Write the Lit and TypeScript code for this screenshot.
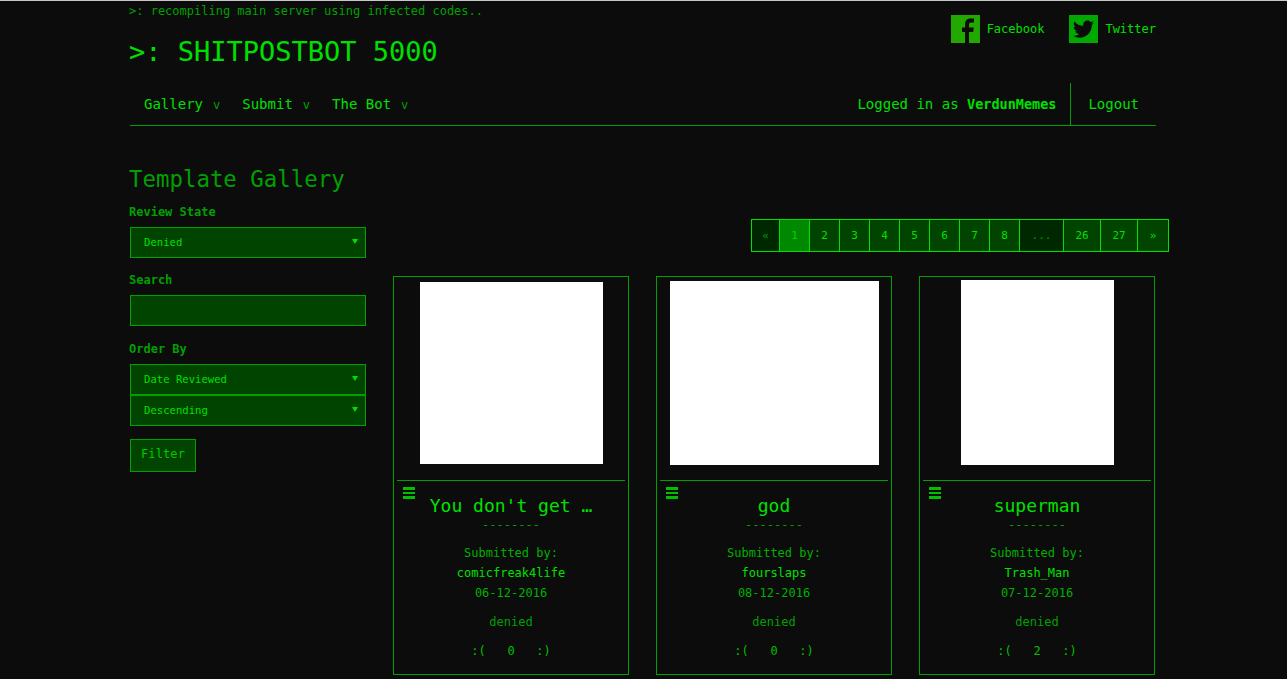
import { LitElement, html, css, svg } from "lit";
import { customElement } from "lit/decorators.js";

const cards = [
  { title: "You don't get …", user: "comicfreak4life", date: "06-12-2016", score: 0, w: 183, h: 182, top: 5, bottom: 16 },
  { title: "god", user: "fourslaps", date: "08-12-2016", score: 0, w: 209, h: 184, top: 4, bottom: 15 },
  { title: "superman", user: "Trash_Man", date: "07-12-2016", score: 2, w: 153, h: 185, top: 3, bottom: 15 },
];
const pages = [
  ["«", 29, "prev"], ["1", 30, "cur"], ["2", 30, ""], ["3", 30, ""], ["4", 30, ""], ["5", 30, ""], ["6", 30, ""],
  ["7", 30, ""], ["8", 30, ""], ["...", 44, "gap"], ["26", 37, ""], ["27", 37, ""], ["»", 31, ""],
] as [string, number, string][];

@customElement("app-root")
export class AppRoot extends LitElement {
  static styles = css`
    :host { display: block; height: 679px; overflow: hidden; background: #0c0c0c; border-top: 1px solid #c8c8c8; box-sizing: border-box;
      font-family: "DejaVu Sans Mono", monospace; color: #00e000; }
    .wrap { margin-left: 130px; width: 1026px; }
    .head { display: flex; justify-content: space-between; height: 82px; border: 0; }
    .tag { font-size: 12px; line-height: 20px; color: #00a000; margin-left: -1px; }
    h1 { margin: 10px 0 0 -1px; font-size: 27px; line-height: 42px; font-weight: 400; color: #00e000; }
    .social { display: flex; padding-top: 14px; }
    .soc { display: flex; align-items: flex-start; margin-left: 25px; font-size: 12px; line-height: 28px; }
    .soc svg { display: block; width: 29px; height: 28px; margin-right: 7px; }
    .nav { display: flex; justify-content: space-between; height: 42px; border-bottom: 1px solid #00a000; box-sizing: content-box; }
    .menu { display: flex; padding-left: 14px; font-size: 14px; line-height: 43px; }
    .menu span.i { margin-right: 22px; }
    .menu i { font-style: normal; font-size: 12px; color: #00a000; margin-left: 10px; }
    .right { display: flex; font-size: 14px; line-height: 42px; }
    .right b { font-size: 13.5px; }
    .logout { border-left: 1px solid #00a000; margin-left: 14px; padding: 0 17px 0 17px; line-height: 43px; }
    h2 { margin: 37px 0 0 -1px; font-size: 22.4px; line-height: 32px; font-weight: 400; color: #00a000; }
    .cols { display: flex; gap: 27px; }
    .side { width: 236px; flex: none; }
    label { display: block; font-size: 12px; font-weight: 700; line-height: 16px; color: #00a000; margin: 0 0 7px -1px; }
    .side label:first-child { margin-top: 9px; }
    .field { height: 31px; box-sizing: border-box; border: 1px solid #00a000; background: #004400; color: #00e000; font-size: 10.6px; line-height: 29px; padding-left: 13px; position: relative; margin-bottom: 14px; }
    .field.sel::after { content: ""; position: absolute; right: 7px; top: 11px; border: 3px solid transparent; border-top: 5px solid #00e000; border-bottom: 0; }
    .field.tight { margin-bottom: 0; }
    .field.input { margin-bottom: 15px; }
    .sel.gap { margin-bottom: 13px; }
    .btn { width: 66px; height: 33px; box-sizing: border-box; border: 1px solid #00a000; background: #004400; color: #00c800; font-size: 12px; line-height: 29px; text-align: center; letter-spacing: 0.1px; }
    .main { flex: 1; min-width: 0; }
    .pager { display: flex; justify-content: flex-end; margin: 24px -13px 24px 0; height: 33px; }
    .pg { box-sizing: border-box; height: 33px; border: 1px solid #00e000; border-left-width: 0; background: #004400; font-size: 11px; line-height: 31px; text-align: center; color: #00e000; }
    .pg.first { border-left-width: 1px; }
    .pg.prev { background: #002800; color: #00a000; border-left-width: 1px; }
    .pg.cur { background: #008800; color: #00d000; }
    .pg.gap { background: #002800; color: #00a000; }
    .cards { display: flex; gap: 27px; }
    .card { width: 236px; height: 399px; box-sizing: border-box; border: 1px solid #00a000; padding: 0 3px; flex: none; text-align: center; }
    .img { display: flex; justify-content: center; border-bottom: 1px solid #00a000; }
    .img div { background: #fff; }
    .foot { position: relative; }
    .burger { position: absolute; left: 6px; top: 6px; width: 12px; height: 12px; display: flex; flex-direction: column; justify-content: space-between; }
    .burger s { display: block; height: 2.6px; background: #00c000; }
    .title { font-size: 18px; line-height: 26px; padding-top: 12px; color: #00e000; }
    .dash { font-size: 12px; line-height: 12px; color: #00a000; height: 24px; }
    .t { font-size: 12px; line-height: 20px; color: #00b000; }
    .u { color: #00e000; }
    .d { color: #00b000; }
    .st { margin-top: 9px; color: #00a000; }
    .vote { margin-top: 9px; font-weight: 400; color: #00c000; white-space: pre; }
  `;

  fb() {
    return html`<svg viewBox="0 0 29 28"><rect width="29" height="28" fill="#22a800"/>
      <path d="M18 28V17h4.2l.6-4.500H18V9.800c0-1.400.5-2.200 2.200-2.200H23V3.600c-.6-.1-1.900-.2-3.400-.2-3.300 0-5.500 2-5.500 5.600v3.500H11V17h3.100v11z" fill="#0c0c0c"/></svg>`;
  }
  tw() {
    return html`<svg viewBox="0 0 29 28"><rect width="29" height="28" fill="#00a800"/>
      <path d="M25 7.700c-.8.400-1.600.600-2.500.7.900-.5 1.600-1.400 1.900-2.400-.8.500-1.800.9-2.700 1-.8-.8-1.900-1.400-3.200-1.400-2.400 0-4.300 1.900-4.300 4.300 0 .3 0 .7.100 1-3.600-.2-6.800-1.900-8.900-4.500-.4.600-.6 1.400-.6 2.200 0 1.500.8 2.800 1.900 3.600-.7 0-1.400-.2-2-.5v.1c0 2.100 1.500 3.800 3.500 4.200-.4.100-.8.200-1.100.2-.3 0-.5 0-.8-.1.500 1.700 2.100 3 4 3-1.500 1.200-3.300 1.800-5.300 1.800-.3 0-.7 0-1-.1 1.900 1.200 4.200 1.900 6.600 1.900 7.900 0 12.200-6.500 12.200-12.200v-.6c.8-.6 1.500-1.300 2-2.200z" fill="#0c0c0c"/></svg>`;
  }

  render() {
    return html`
      <div class="wrap">
        <div class="head">
          <div>
            <div class="tag">&gt;: recompiling main server using infected codes..</div>
            <h1>&gt;: SHITPOSTBOT 5000</h1>
          </div>
          <div class="social">
            <div class="soc">${this.fb()}Facebook</div>
            <div class="soc">${this.tw()}Twitter</div>
          </div>
        </div>
        <div class="nav">
          <div class="menu">
            <span class="i">Gallery<i>v</i></span>
            <span class="i">Submit<i>v</i></span>
            <span class="i">The Bot<i>v</i></span>
          </div>
          <div class="right">
            <span>Logged in as <b>VerdunMemes</b></span>
            <span class="logout">Logout</span>
          </div>
        </div>
        <h2>Template Gallery</h2>
        <div class="cols">
          <div class="side">
            <label>Review State</label>
            <div class="field sel">Denied</div>
            <label>Search</label>
            <div class="field input"></div>
            <label>Order By</label>
            <div class="field sel tight">Date Reviewed</div>
            <div class="field sel gap">Descending</div>
            <div class="btn">Filter</div>
          </div>
          <div class="main">
            <div class="pager">
              ${pages.map(([t, w, c]) => html`<div class="pg ${c}" style="width:${w}px">${t}</div>`)}
            </div>
            <div class="cards">
              ${cards.map((c) => html`
                <div class="card">
                  <div class="img" style="padding:${c.top - 0}px 0 ${c.bottom}px">
                    <div style="width:${c.w}px;height:${c.h}px"></div>
                  </div>
                  <div class="foot">
                    <div class="burger"><s></s><s></s><s></s></div>
                    <div class="title">${c.title}</div>
                    <div class="dash">--------</div>
                    <div class="t">Submitted by:</div>
                    <div class="t u">${c.user}</div>
                    <div class="t d">${c.date}</div>
                    <div class="t st">denied</div>
                    <div class="t vote">:(   ${c.score}   :)</div>
                  </div>
                </div>`)}
            </div>
          </div>
        </div>
      </div>`;
  }
}
void svg;
